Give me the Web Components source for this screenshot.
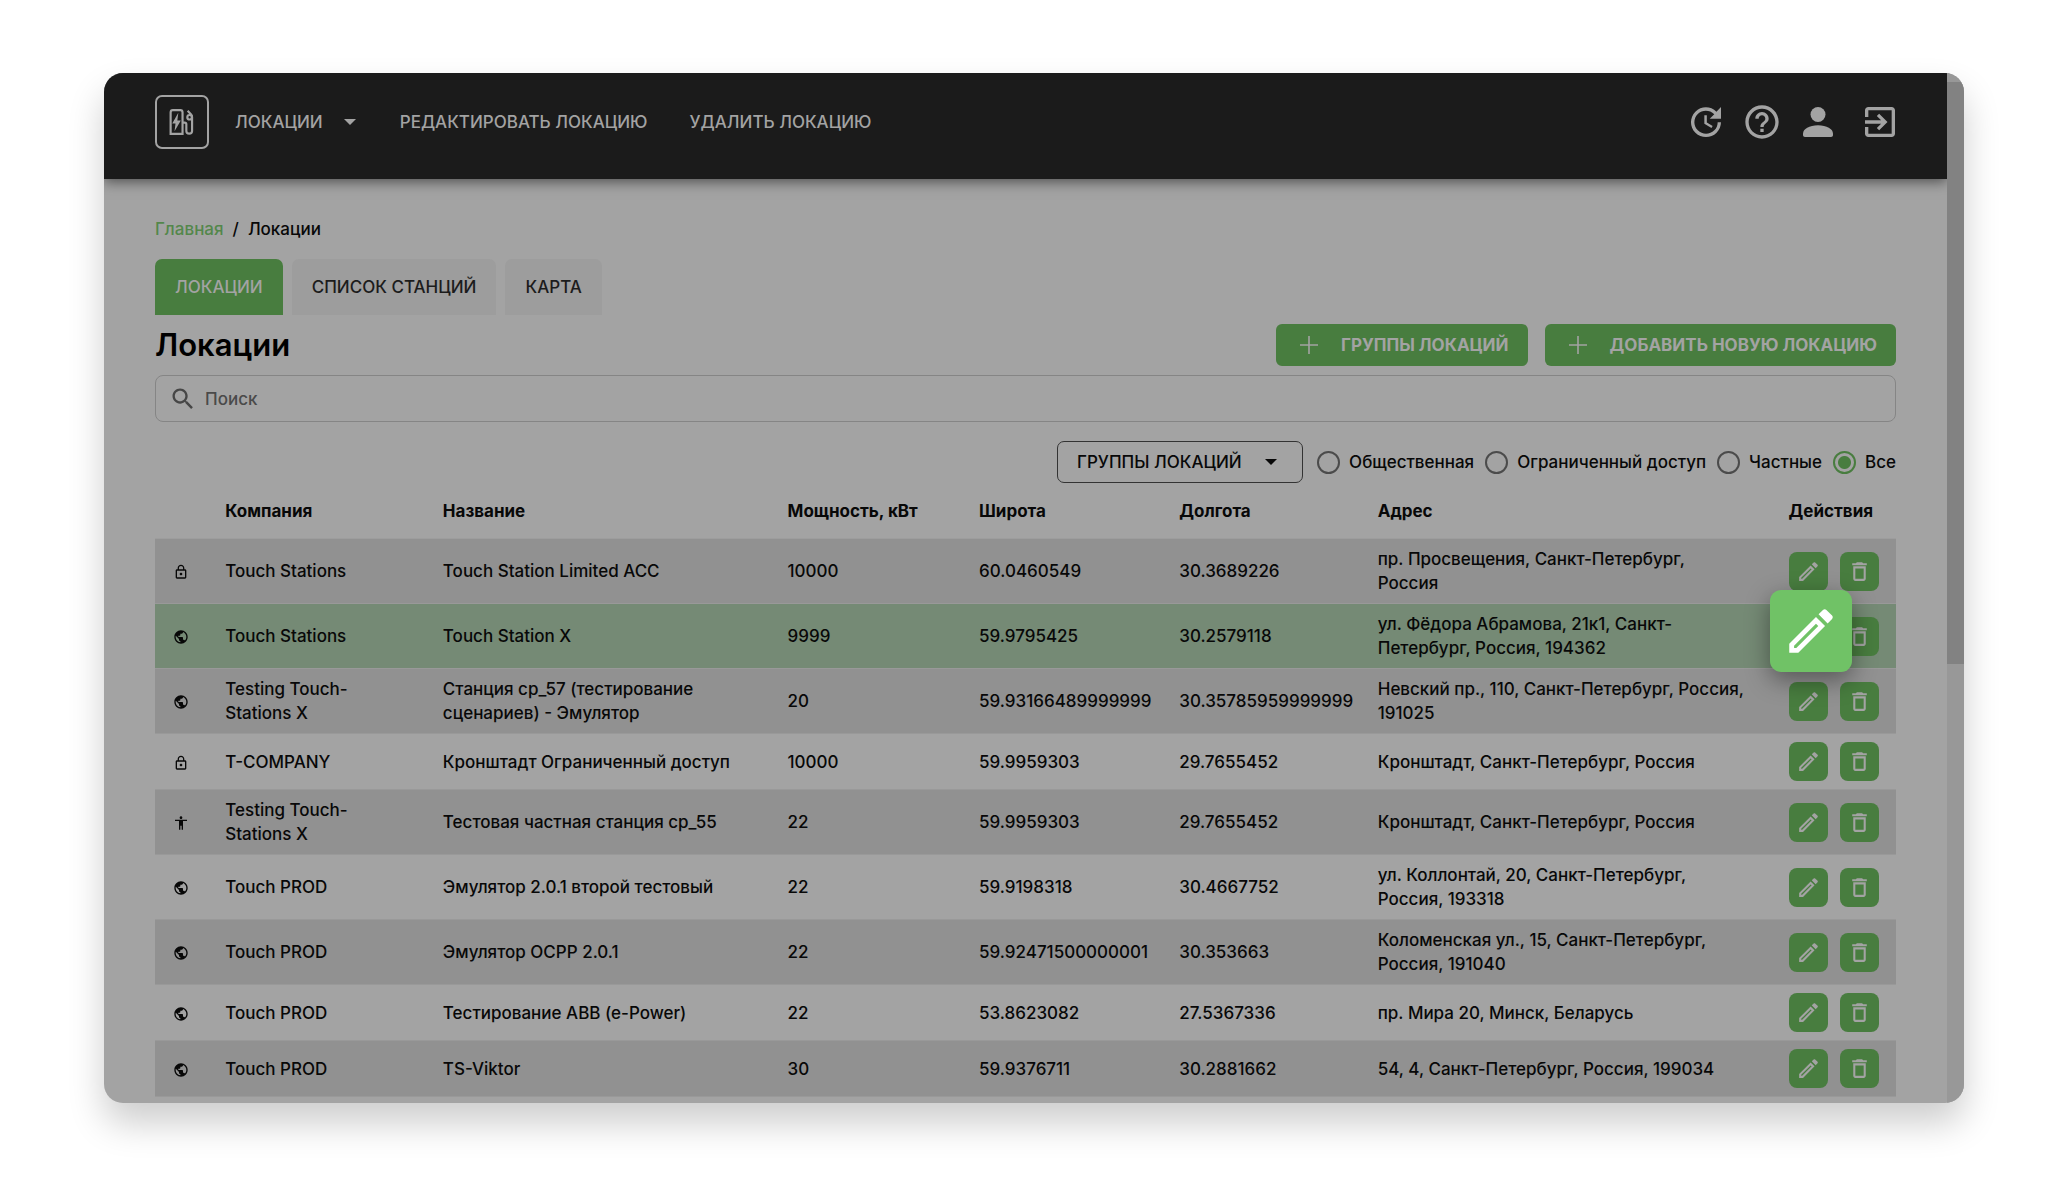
<!DOCTYPE html>
<html lang="ru">
<head>
<meta charset="utf-8">
<meta name="viewport" content="width=device-width, initial-scale=1">
<title>Локации</title>
<style>
  :root {
    --ink: #080808;
    --surface: #a3a3a3;
    --row: #919191;
    --row-active: #758a75;
    --bar: #1b1b1b;
    --on-bar: #a3a3a3;
    --green: #487d3f;
    --green-bright: #70c266;
    --line: #858585;
  }
  * { box-sizing: border-box; }
  body {
    margin: 0;
    min-height: 100vh;
    padding: 73px 103px 74px 104px;
    background: #fff;
    color: var(--ink);
    font: 500 17px/24px Inter, "Noto Sans", sans-serif;
  }
</style>
</head>
<body>
<app-window>
  <top-bar slot="bar"></top-bar>
  <bread-crumbs></bread-crumbs>
  <page-tabs></page-tabs>
  <page-heading>Локации</page-heading>
  <search-box></search-box>
  <access-filter></access-filter>
  <locations-table></locations-table>
</app-window>

<script>
const ICONS = {
  update: '<path d="M21 10.12h-6.78l2.74-2.82c-2.73-2.7-7.15-2.8-9.88-.1-2.73 2.71-2.73 7.08 0 9.79s7.15 2.71 9.88 0C18.32 15.65 19 14.08 19 12.1h2c0 1.98-.88 4.55-2.64 6.29-3.51 3.48-9.21 3.48-12.72 0-3.5-3.47-3.53-9.11-.02-12.58s9.14-3.47 12.65 0L21 3v7.12zM12.5 8v4.25l3.5 2.08-.72 1.21L11 13V8h1.5z"/>',
  help: '<path d="M11 18h2v-2h-2v2zm1-16C6.48 2 2 6.48 2 12s4.48 10 10 10 10-4.48 10-10S17.52 2 12 2zm0 18c-4.41 0-8-3.59-8-8s3.59-8 8-8 8 3.59 8 8-3.59 8-8 8zm0-14c-2.21 0-4 1.79-4 4h2c0-1.1.9-2 2-2s2 .9 2 2c0 2-3 1.75-3 5h2c0-2.25 3-2.5 3-5 0-2.21-1.79-4-4-4z"/>',
  person: '<circle cx="12" cy="7.5" r="4.5"/><path d="M12 14c-5.2 0-9 2.2-9 5v.8c0 .7.5 1.2 1.2 1.2h15.6c.7 0 1.2-.5 1.2-1.2V19c0-2.8-3.8-5-9-5z"/>',
  exit: '<path d="M10.09 15.59L11.5 17l5-5-5-5-1.41 1.41L12.67 11H3v2h9.67l-2.58 2.59zM19 3H5c-1.11 0-2 .9-2 2v4h2V5h14v14H5v-4H3v4c0 1.1.89 2 2 2h14c1.1 0 2-.9 2-2V5c0-1.1-.9-2-2-2z"/>',
  caret: '<path d="M6 9l6 6 6-6z"/>',
  plus: '<path d="M11.200 3h1.600v8.200H21v1.600h-8.200V21h-1.600v-8.200H3v-1.600h8.200z"/>',
  search: '<path d="M15.5 14h-.79l-.28-.27C15.41 12.59 16 11.11 16 9.5 16 5.91 13.09 3 9.5 3S3 5.91 3 9.5 5.91 16 9.5 16c1.61 0 3.09-.59 4.23-1.57l.27.28v.79l5 4.99L20.49 19l-4.99-5zm-6 0C7.01 14 5 11.99 5 9.5S7.01 5 9.5 5 14 7.01 14 9.5 11.99 14 9.5 14z"/>',
  pencil: '<path d="M14.06 9L15 9.94 5.92 19H5v-.92L14.06 9M17.66 3c-.25 0-.51.1-.7.29l-1.83 1.83 3.75 3.75 1.83-1.83c.39-.39.39-1.04 0-1.41l-2.34-2.34c-.2-.2-.45-.29-.71-.29M14.06 6.19L3 17.25V21h3.75L17.81 9.94 14.06 6.19z"/>',
  trash: '<path d="M6 19c0 1.1.9 2 2 2h8c1.1 0 2-.9 2-2V7H6v12zM8 9h8v10H8V9zm7.5-5l-1-1h-5l-1 1H5v2h14V4h-3.5z"/>',
  lock: '<path d="M12 17c1.1 0 2-.9 2-2s-.9-2-2-2-2 .9-2 2 .9 2 2 2zm6-9h-1V6c0-2.76-2.24-5-5-5S7 3.24 7 6v2H6c-1.1 0-2 .9-2 2v10c0 1.1.9 2 2 2h12c1.1 0 2-.9 2-2V10c0-1.1-.9-2-2-2zM8.9 6c0-1.71 1.39-3.1 3.1-3.1s3.1 1.39 3.1 3.1v2H8.9V6zM18 20H6V10h12v10z"/>',
  globe: '<path d="M12 2C6.48 2 2 6.48 2 12s4.48 10 10 10 10-4.48 10-10S17.52 2 12 2zm-1 17.93c-3.95-.49-7-3.85-7-7.93 0-.62.08-1.21.21-1.79L9 15v1c0 1.1.9 2 2 2v1.93zm6.9-2.54c-.26-.81-1-1.39-1.9-1.39h-1v-3c0-.55-.45-1-1-1H8v-2h2c.55 0 1-.45 1-1V7h2c1.1 0 2-.9 2-2v-.41c2.93 1.19 5 4.06 5 7.41 0 2.08-.8 3.97-2.1 5.39z"/>',
  human: '<path d="M12 2c1.1 0 2 .9 2 2s-.9 2-2 2-2-.9-2-2 .9-2 2-2zm9 7h-6v13h-2v-6h-2v6H9V9H3V7h18v2z"/>',
  station: '<g fill="none" stroke="currentColor" stroke-width="2"><path d="M1.5 23V3.200C1.500 1.800 2.300 1 3.500 1h7c1.200 0 2 .8 2 2.200V23z"/><path d="M12.500 12.600h2c1 0 1.500.5 1.500 1.500v6.200c0 3.200 5.300 3.200 5.300 0V7.300c0-1-.3-1.600-.9-2.300l-3.200-3.300"/><circle cx="19" cy="7.600" r="2.100"/></g><path d="M8.600 3.500l-5.600 9.800h3l-.9 7.200 5.800-9.900H7.700z"/>'
};

function define(name, html, setup) {
  const tpl = document.createElement('template');
  tpl.innerHTML = '<style>*{box-sizing:border-box}button,input,select{font:inherit;color:inherit;margin:0}button{cursor:pointer}</style>' + html;
  customElements.define(name, class extends HTMLElement {
    constructor() {
      super();
      this.attachShadow({ mode: 'open' }).append(tpl.content.cloneNode(true));
    }
    connectedCallback() { if (setup) setup.call(this, this.shadowRoot); }
  });
}

define('ui-icon', `
  <style>
    :host { display: inline-flex; flex: none; width: var(--size, 24px); height: var(--size, 24px); }
    svg { width: 100%; height: 100%; fill: currentColor; }
  </style>
  <svg viewBox="0 0 24 24" aria-hidden="true"></svg>`,
  function (root) { root.querySelector('svg').innerHTML = ICONS[this.getAttribute('name')]; });

define('app-window', `
  <style>
    :host {
      display: flex; height: calc(100vh - 147px); min-height: 480px; overflow: hidden;
      background: var(--surface); border-radius: 19px;
      box-shadow: 0 20px 36px rgba(0,0,0,.2);
    }
    .view { flex: 1; min-width: 0; display: flex; flex-direction: column; }
    main { flex: 1; min-height: 0; overflow: hidden; padding: 38px 51px 0; }
    .scroll { flex: none; width: 17px; padding-top: 9px; background: #989898; }
    .thumb { height: 57%; background: #828282; }
  </style>
  <div class="view"><slot name="bar"></slot><main><slot></slot></main></div>
  <div class="scroll"><div class="thumb"></div></div>`);

define('top-bar', `
  <style>
    :host {
      display: flex; align-items: flex-start; justify-content: space-between; flex: none;
      padding: 22px 47px 30px 51px; background: var(--bar); color: var(--on-bar);
      box-shadow: 0 3px 12px rgba(0,0,0,.5);
    }
    nav, .tools { display: flex; align-items: center; height: 54px; }
    .logo {
      display: flex; align-items: center; justify-content: center; width: 54px; height: 54px;
      margin-right: 26px; border: 2px solid; border-radius: 7px; color: inherit; --size: 26px;
    }
    button { display: flex; align-items: center; padding: 0; border: 0; background: none; white-space: nowrap; }
    .menu { gap: 15px; margin-right: 38px; }
    .action { margin-right: 42px; }
    .tools { gap: 16px; --size: 40px; }
    .tools button:last-child { margin-left: 6px; }
  </style>
  <nav>
    <a class="logo" href="#" aria-label="На главную"><ui-icon name="station"></ui-icon></a>
    <button class="menu">ЛОКАЦИИ <ui-icon name="caret"></ui-icon></button>
    <button class="action">РЕДАКТИРОВАТЬ ЛОКАЦИЮ</button>
    <button class="action">УДАЛИТЬ ЛОКАЦИЮ</button>
  </nav>
  <div class="tools">
    <button aria-label="Обновить"><ui-icon name="update"></ui-icon></button>
    <button aria-label="Помощь"><ui-icon name="help"></ui-icon></button>
    <button aria-label="Профиль"><ui-icon name="person"></ui-icon></button>
    <button aria-label="Выход"><ui-icon name="exit"></ui-icon></button>
  </div>`);

define('bread-crumbs', `
  <style>
    :host { display: flex; gap: 9px; margin-bottom: 18px; }
    a { color: #53874b; text-decoration: none; }
  </style>
  <a href="#">Главная</a><span>/</span><span>Локации</span>`);

define('page-tabs', `
  <style>
    :host { display: flex; gap: 9px; margin-bottom: 9px; }
    button { height: 56px; padding: 0 20px; border: 0; border-radius: 7px 7px 0 0; background: #9d9d9d; color: #1c1c1c; }
    .on { background: var(--green); color: var(--surface); }
  </style>
  <button class="on">ЛОКАЦИИ</button><button>СПИСОК СТАНЦИЙ</button><button>КАРТА</button>`);

define('page-heading', `
  <style>
    :host { display: flex; align-items: center; gap: 17px; margin-bottom: 9px; }
    h1 { flex: 1; margin: 0; font-size: 31px; line-height: 36px; font-weight: 600; color: #000; }
    button {
      display: flex; align-items: center; gap: 20px; height: 42px; padding: 0 19px 0 21px;
      border: 0; border-radius: 6px; background: var(--green); color: var(--surface); font-weight: 700;
    }
  </style>
  <h1><slot></slot></h1>
  <button><ui-icon name="plus"></ui-icon>ГРУППЫ ЛОКАЦИЙ</button>
  <button><ui-icon name="plus"></ui-icon>ДОБАВИТЬ НОВУЮ ЛОКАЦИЮ</button>`);

define('search-box', `
  <style>
    :host { display: block; margin-bottom: 19px; }
    label {
      display: flex; align-items: center; gap: 8px; height: 47px; padding: 0 13px;
      border: 1px solid var(--line); border-radius: 8px; color: #464646; --size: 28px;
    }
    input { flex: 1; min-width: 0; padding: 0; border: 0; outline: 0; background: none; }
    input::placeholder { color: #4a4a4a; opacity: 1; }
  </style>
  <label><ui-icon name="search"></ui-icon><input type="text" placeholder="Поиск" aria-label="Поиск"></label>`);

define('access-filter', `
  <style>
    :host { display: flex; align-items: center; justify-content: flex-end; gap: 11px; }
    .drop { display: grid; align-items: center; margin-right: 3px; }
    .drop > * { grid-area: 1 / 1; }
    .drop ui-icon { justify-self: end; margin-right: 20px; pointer-events: none; }
    select {
      appearance: none; height: 42px; padding: 0 60px 0 19px; border: 1px solid #333;
      border-radius: 7px; background: none;
    }
    label { display: flex; align-items: center; gap: 9px; }
    input {
      appearance: none; width: 23px; height: 23px; border: 2px solid #4b4b4b; border-radius: 50%;
    }
    input:checked {
      border-color: var(--green);
      background: radial-gradient(circle, var(--green) 6px, transparent 7px);
    }
  </style>
  <div class="drop">
    <select aria-label="Группы локаций"><option>ГРУППЫ ЛОКАЦИЙ</option></select>
    <ui-icon name="caret"></ui-icon>
  </div>
  <label><input type="radio" name="access">Общественная</label>
  <label><input type="radio" name="access">Ограниченный доступ</label>
  <label><input type="radio" name="access">Частные</label>
  <label><input type="radio" name="access" checked>Все</label>`);

define('icon-button', `
  <style>
    :host { display: block; }
    button {
      display: flex; align-items: center; justify-content: center; padding: 0; border: 0;
      width: var(--box, 39px); height: var(--box, 39px); border-radius: var(--radius, 8px);
      background: var(--fill, var(--green)); color: var(--glyph, var(--surface));
      box-shadow: var(--lift, none); --size: var(--glyph-size, 25px);
    }
  </style>
  <button></button>`,
  function (root) {
    const button = root.querySelector('button');
    button.setAttribute('aria-label', this.getAttribute('label'));
    button.innerHTML = '<ui-icon name="' + this.getAttribute('icon') + '"></ui-icon>';
  });

const LOCATIONS = [
  ['lock', 'Touch Stations', 'Touch Station Limited ACC', '10000', '60.0460549', '30.3689226', 'пр. Просвещения, Санкт-Петербург, Россия'],
  ['globe', 'Touch Stations', 'Touch Station X', '9999', '59.9795425', '30.2579118', 'ул. Фёдора Абрамова, 21к1, Санкт-Петербург, Россия, 194362'],
  ['globe', 'Testing Touch-Stations X', 'Станция ср_57 (тестирование сценариев) - Эмулятор', '20', '59.93166489999999', '30.35785959999999', 'Невский пр., 110, Санкт-Петербург, Россия, 191025'],
  ['lock', 'T-COMPANY', 'Кронштадт Ограниченный доступ', '10000', '59.9959303', '29.7655452', 'Кронштадт, Санкт-Петербург, Россия'],
  ['human', 'Testing Touch-Stations X', 'Тестовая частная станция ср_55', '22', '59.9959303', '29.7655452', 'Кронштадт, Санкт-Петербург, Россия'],
  ['globe', 'Touch PROD', 'Эмулятор 2.0.1 второй тестовый', '22', '59.9198318', '30.4667752', 'ул. Коллонтай, 20, Санкт-Петербург, Россия, 193318'],
  ['globe', 'Touch PROD', 'Эмулятор ОСРР 2.0.1', '22', '59.92471500000001', '30.353663', 'Коломенская ул., 15, Санкт-Петербург, Россия, 191040'],
  ['globe', 'Touch PROD', 'Тестирование ABB (e-Power)', '22', '53.8623082', '27.5367336', 'пр. Мира 20, Минск, Беларусь'],
  ['globe', 'Touch PROD', 'TS-Viktor', '30', '59.9376711', '30.2881662', '54, 4, Санкт-Петербург, Россия, 199034']
];
const ACTIVE = 1;

define('locations-table', `
  <style>
    :host { display: block; }
    table { width: 100%; border-collapse: separate; border-spacing: 0; table-layout: fixed; }
    th { padding: 16px 0 15px 18px; border-bottom: 1px solid #9d9d9d; text-align: left; font-weight: 700; }
    td { padding: 8px 18px; border-bottom: 1px solid #999; vertical-align: middle; }
    td:first-child { padding: 8px 0; text-align: center; --size: 16px; }
    td:first-child ui-icon { vertical-align: middle; }
    td:nth-child(7) { padding-right: 23px; }
    td:last-child { position: relative; padding-right: 0; }
    tr:nth-child(odd) td { background: var(--row); }
    tr.active td { background: var(--row-active); }
    .actions { display: flex; gap: 12px; }
    .spot {
      position: absolute; z-index: 1; left: -1px; top: -14px;
      --box: 82px; --radius: 11px; --glyph-size: 58px; --fill: var(--green-bright); --glyph: #fff;
      --lift: 0 8px 24px rgba(0,0,0,.4);
    }
    .c-type { width: 3%; } .c-company { width: 12.5%; } .c-name { width: 19.8%; } .c-power { width: 11%; }
    .c-lat { width: 11.5%; } .c-lng { width: 11.4%; } .c-addr { width: 23.6%; } .c-act { width: 7.2%; }
  </style>
  <table>
    <colgroup>
      <col class="c-type"><col class="c-company"><col class="c-name"><col class="c-power">
      <col class="c-lat"><col class="c-lng"><col class="c-addr"><col class="c-act">
    </colgroup>
    <thead><tr>
      <th></th><th>Компания</th><th>Название</th><th>Мощность, кВт</th><th>Широта</th><th>Долгота</th><th>Адрес</th><th>Действия</th>
    </tr></thead>
    <tbody></tbody>
  </table>`,
  function (root) {
    root.querySelector('tbody').innerHTML = LOCATIONS.map(([icon, ...cells], i) =>
      '<tr' + (i === ACTIVE ? ' class="active"' : '') + '><td><ui-icon name="' + icon + '"></ui-icon></td>' +
      cells.map(c => '<td>' + c + '</td>').join('') +
      '<td><div class="actions"><icon-button icon="pencil" label="Редактировать"></icon-button>' +
      '<icon-button icon="trash" label="Удалить"></icon-button></div>' +
      (i === ACTIVE ? '<icon-button class="spot" icon="pencil" label="Редактировать локацию"></icon-button>' : '') +
      '</td></tr>').join('');
  });
</script>
</body>
</html>
